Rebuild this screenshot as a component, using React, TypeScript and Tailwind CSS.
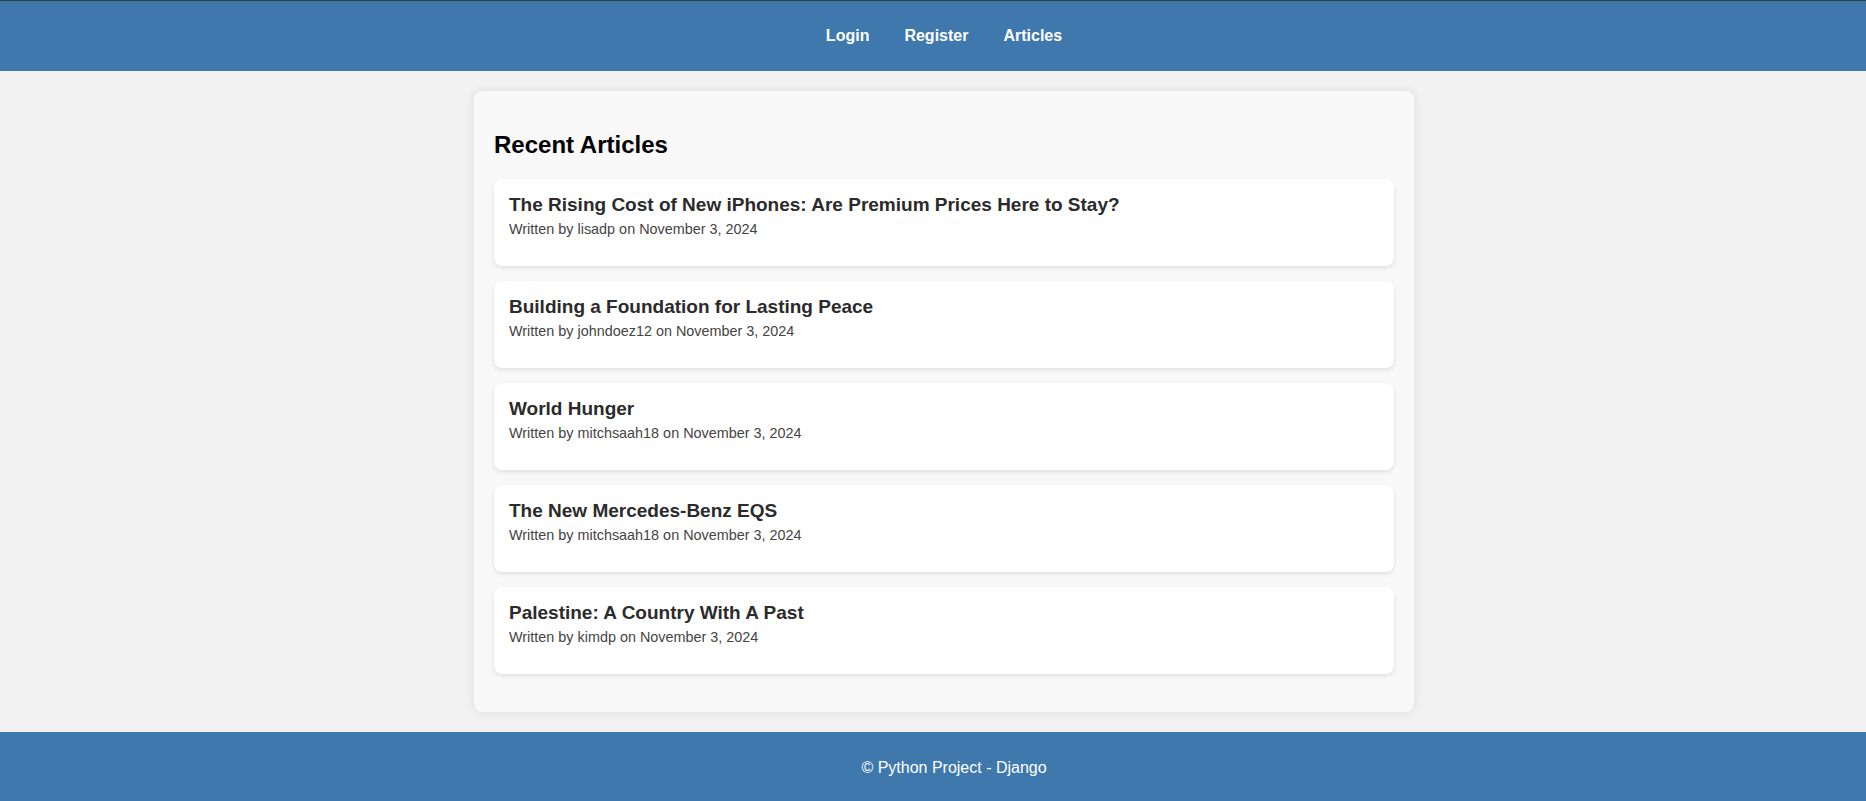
const articles = [
  { title: 'The Rising Cost of New iPhones: Are Premium Prices Here to Stay?', author: 'lisadp' },
  { title: 'Building a Foundation for Lasting Peace', author: 'johndoez12' },
  { title: 'World Hunger', author: 'mitchsaah18' },
  { title: 'The New Mercedes-Benz EQS', author: 'mitchsaah18' },
  { title: 'Palestine: A Country With A Past', author: 'kimdp' },
];

export default function App() {
  return (
    <div className="min-h-screen flex flex-col bg-[#f2f2f2] font-['Liberation_Sans',Arial,sans-serif]">
      <header className="border-t border-[#3a3a3a] bg-[#3e78ad] h-[71px] flex items-center justify-center pl-[22px]">
        <nav className="flex gap-[35px] text-white font-bold text-[16px] pb-[1px]">
          <a href="#">Login</a>
          <a href="#">Register</a>
          <a href="#">Articles</a>
        </nav>
      </header>

      <main className="flex justify-center pl-[22px] py-[20px]">
        <div className="w-[940px] bg-[#f8f8f8] rounded-[8px] shadow-[0_0_10px_rgba(0,0,0,0.1)] p-[20px]">
          <h2 className="text-[24px] leading-[27.6px] font-bold text-black mt-[20px] mb-[20px]">Recent Articles</h2>
          <div className="flex flex-col gap-[15px] pb-[18px]">
            {articles.map((article, index) => (
              <div key={index} className="bg-white rounded-[8px] shadow-[0_2px_4px_rgba(0,0,0,0.1)] p-[15px]">
                <h3 className="text-[19px] leading-[21.5px] font-bold text-[#2b2b2b]">{article.title}</h3>
                <p className="mt-[6px] mb-[13px] text-[14.4px] leading-[16.6px] text-[#444]">
                  Written by {article.author} on November 3, 2024
                </p>
              </div>
            ))}
          </div>
        </div>
      </main>

      <footer className="flex-1 bg-[#3e78ad] text-white text-[16px] flex justify-center pt-[24px] pb-[24px] pl-[42px]">
        <p>© Python Project - Django</p>
      </footer>
    </div>
  );
}
